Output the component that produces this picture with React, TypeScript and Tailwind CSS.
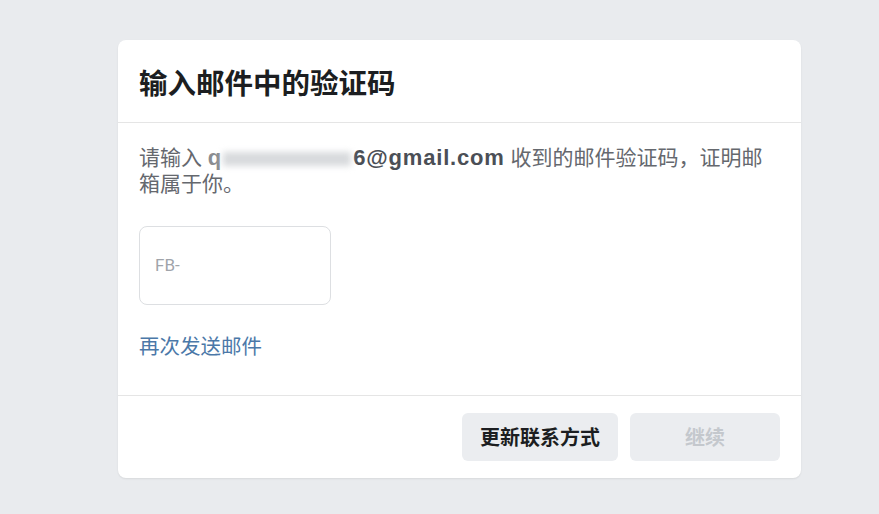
import React from "react";

export default function App() {
  return (
    <div
      className="w-[879px] h-[514px] bg-[#e9ebee] pt-[40px] pl-[118px]"
      style={{ fontFamily: '"Liberation Sans", "Noto Sans CJK SC", sans-serif' }}
    >
      <div className="w-[683px] h-[438px] bg-white rounded-[8px] shadow-[0_1px_2px_rgba(0,0,0,0.08)] flex flex-col">
        <div className="h-[83px] border-b border-[#e5e5e5] flex items-center pl-[21px]">
          <div className="text-[28.5px] font-bold text-[#1c1e21] leading-none pt-[2px]" style={{ fontFamily: '"Noto Sans CJK SC", sans-serif' }}>
            输入邮件中的验证码
          </div>
        </div>
        <div className="flex-1 px-[21px] pt-[22px]">
          <div className="text-[21px] leading-[26px] text-[#65686e] w-[642px]">
            请输入 <span className="text-[#8a8d91] font-bold text-[22px]">q</span><span className="inline-block w-[128px] h-[14px] bg-[#d8dadd] blur-[3px] align-middle mx-[2px]"></span><span className="font-bold text-[#4b4f56] text-[22px] tracking-[0.8px]">6@gmail.com</span> 收到的邮件验证码，证明邮箱属于你。
          </div>
          <div className="mt-[29px] w-[192px] h-[79px] border border-[#dddfe2] rounded-[8px] flex items-center pl-[15px]">
            <span className="text-[17px] text-[#a0a4aa]" style={{ fontFamily: 'Roboto, sans-serif' }}>FB-</span>
          </div>
          <div className="mt-[29px] text-[20.5px] leading-[26px] text-[#4b78a8]">再次发送邮件</div>
        </div>
        <div className="h-[83px] border-t border-[#e5e5e5] flex items-center justify-end pr-[21px] gap-[12px]">
          <button className="w-[156px] h-[48px] rounded-[6px] bg-[#ebedf0] text-[20px] font-bold text-[#1c1e21]" style={{ fontFamily: '"Noto Sans CJK SC", sans-serif' }}>
            更新联系方式
          </button>
          <button className="w-[150px] h-[48px] rounded-[6px] bg-[#ebedf0] text-[20px] font-bold text-[#c4c8cd]" style={{ fontFamily: '"Noto Sans CJK SC", sans-serif' }}>
            继续
          </button>
        </div>
      </div>
    </div>
  );
}
